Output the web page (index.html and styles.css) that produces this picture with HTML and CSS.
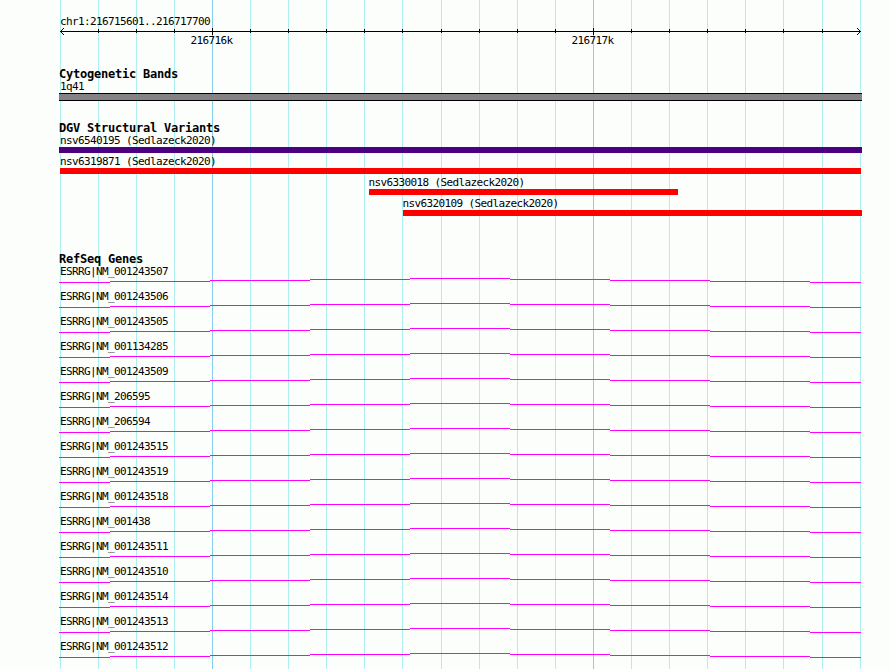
FILE: index.html
```
<!DOCTYPE html>
<html lang="en">
<head>
<meta charset="UTF-8" />
<meta name="viewport" content="width=device-width, initial-scale=1.0"/>
<title>chr1:216715601..216717700</title>
<link rel="stylesheet" href="styles.css">
</head>
<body>
<div class="browser">
<svg class="grid" width="890" height="669" shape-rendering="crispEdges">
<path class="minor" d="M60.5 0V669M98.5 0V669M136.5 0V669M174.5 0V669M250.5 0V669M288.5 0V669M326.5 0V669M364.5 0V669M402.5 0V669M441.5 0V669M479.5 0V669M517.5 0V669M555.5 0V669M631.5 0V669M669.5 0V669M707.5 0V669M745.5 0V669M783.5 0V669M822.5 0V669M860.5 0V669"/>
<path class="major" d="M212.5 0V669M593.5 0V669"/>
</svg>
<div class="ruler">
<div class="label">chr1:216715601..216717700</div>
<svg class="axis" width="803" height="6" shape-rendering="crispEdges">
<path d="M1 3.5H802"/>
<path d="M39.5 1V5M77.5 1V5M115.5 1V5M191.5 1V5M229.5 1V5M267.5 1V5M305.5 1V5M343.5 1V5M382.5 1V5M420.5 1V5M458.5 1V5M496.5 1V5M572.5 1V5M610.5 1V5M648.5 1V5M686.5 1V5M724.5 1V5M763.5 1V5"/>
<path d="M153.5 0V7M534.5 0V7"/>
<path d="M4 .5H5M3 1.5H4M2 2.5H3M2 4.5H3M3 5.5H4M4 6.5H5M798 .5H799M799 1.5H800M800 2.5H801M800 4.5H801M799 5.5H800M798 6.5H799"/>
</svg>
<div class="scale">
<div class="label">216716k</div>
<div class="label">216717k</div>
</div>
</div>
<div class="track bands">
<div class="title">Cytogenetic Bands</div>
<div class="label">1q41</div>
<div class="band"></div>
</div>
<div class="track variants">
<div class="title">DGV Structural Variants</div>
<div class="variant complex">
<div class="label">nsv6540195 (Sedlazeck2020)</div>
<div class="bar"></div>
</div>
<div class="variant full">
<div class="label">nsv6319871 (Sedlazeck2020)</div>
<div class="bar"></div>
</div>
<div class="variant inner">
<div class="label">nsv6330018 (Sedlazeck2020)</div>
<div class="bar"></div>
</div>
<div class="variant right">
<div class="label">nsv6320109 (Sedlazeck2020)</div>
<div class="bar"></div>
</div>
</div>
<div class="track genes">
<div class="title">RefSeq Genes</div>
<div id="genes"></div>
</div>
</div>
<script>
   const genes = [
     'NM_001243507', 'NM_001243506', 'NM_001243505', 'NM_001134285',
     'NM_001243509', 'NM_206595', 'NM_206594', 'NM_001243515',
     'NM_001243519', 'NM_001243518', 'NM_001438', 'NM_001243511',
     'NM_001243510', 'NM_001243514', 'NM_001243513', 'NM_001243512'
   ];
   // intron line, stepped 1px every 100px
   const intron = 'M0 4.5H51M51 3.5H151M151 2.5H251M251 1.5H351M351 .5H451M451 1.5H551M551 2.5H651M651 3.5H751M751 4.5H802';
   document.getElementById('genes').innerHTML = genes.map(name => `
     <div class="gene">
       <div class="label">ESRRG|${name}</div>
       <svg class="intron" width="803" height="5" shape-rendering="crispEdges"><path d="${intron}"/></svg>
     </div>`).join('');
</script>
</body>
</html>
```
FILE: styles.css
```
body {
  margin: 0;
  background-color: #fcfefc;
  color: #000;
  font-family: 'DejaVu Sans Mono', monospace;
  font-size: 11px;
  line-height: 14px;
}
.browser {
  position: relative;
  box-sizing: border-box;
  width: 890px;
  height: 669px;
  padding: 15px 28px 0 59px;
  overflow: hidden;
}
svg {
  display: block;
  fill: none;
}
.grid {
  position: absolute;
  top: 0;
  left: 0;
}
.minor {
  stroke: #afeeee;
}
.major {
  stroke: #87ceeb;
}
.ruler,
.track {
  position: relative;
}
.label {
  height: 12px;
  padding-left: 1px;
  letter-spacing: -0.623px;
  white-space: pre;
}
.title {
  height: 12px;
  font-size: 12px;
  font-weight: bold;
  line-height: 12px;
  letter-spacing: -0.225px;
  white-space: pre;
}
.axis {
  margin-top: 1px;
  overflow: visible;
  stroke: #000;
}
.scale {
  display: flex;
  gap: 338px;
  padding-left: 130.5px;
}
.bands {
  margin-top: 22px;
}
.band {
  box-sizing: border-box;
  height: 8px;
  margin-top: 1px;
  background-color: #848284;
  border-top: 1px solid #000;
  border-bottom: 1px solid #000;
}
.variants {
  margin-top: 21px;
}
.variant {
  height: 21px;
}
.bar {
  height: 6px;
  margin-top: 1px;
  background-color: #f00;
}
.complex .bar {
  background-color: #4b0082;
}
.full .bar {
  margin-left: 1px;
  margin-right: 1px;
}
.inner {
  width: 309px;
  margin-left: 310px;
}
.right {
  margin-left: 344px;
}
.inner .label,
.right .label {
  padding-left: 0;
  margin-left: -0.5px;
}
.genes {
  margin-top: 35px;
}
.gene {
  height: 25px;
}
.intron {
  margin-top: 1px;
  stroke: #f0f;
}
```
